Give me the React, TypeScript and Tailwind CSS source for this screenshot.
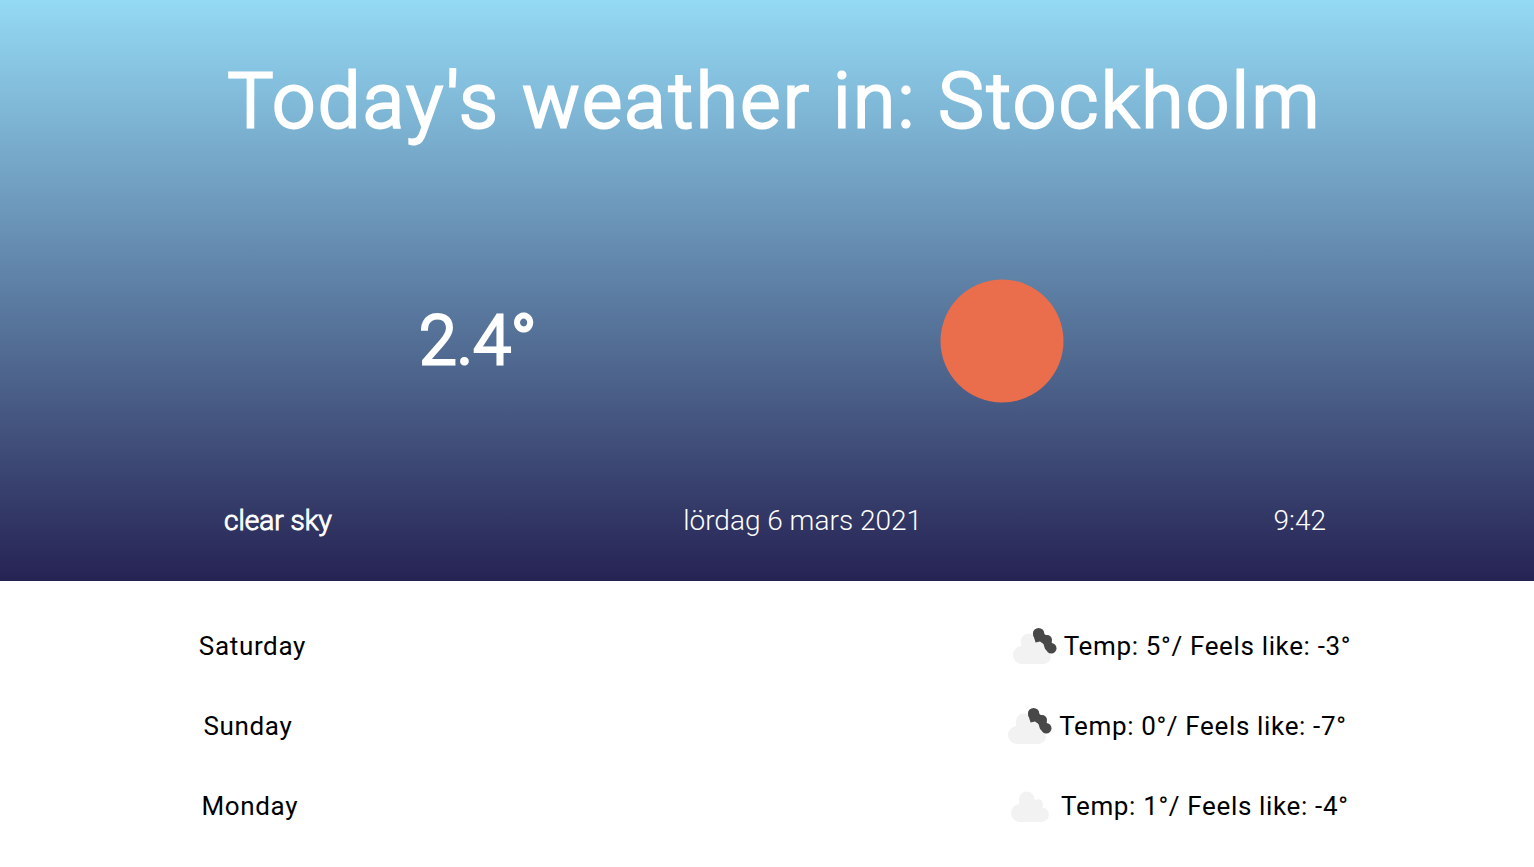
const days = [
  { name: "Saturday", temp: "5", feels: "-3", broken: true },
  { name: "Sunday", temp: "0", feels: "-7", broken: true },
  { name: "Monday", temp: "1", feels: "-4", broken: false },
];

function Cloud({ broken }: { broken: boolean }) {
  return (
    <svg className="size-[50px] shrink-0 overflow-visible" viewBox="-1 -1 50 50" aria-hidden="true">
      <g fill="#f2f2f2" transform={broken ? "translate(0 2)" : "translate(1 0)"}>
        <circle cx="21.7" cy="17.3" r="7.8" />
        <circle cx="33" cy="22" r="4.8" />
        <circle cx="15" cy="31" r="9" />
        <circle cx="36.6" cy="32.7" r="7.3" />
        <path d="M14 17.5h15.5l8 5V40H15z" />
      </g>
      {broken && (
        <g fill="#484848">
          <circle cx="31.6" cy="11.6" r="5.7" />
          <circle cx="40" cy="18" r="5" />
          <circle cx="44.3" cy="26.3" r="5.2" />
          <path d="M26.2 13L28.6 20.5L33 19.5L36.5 22L38 27L42 30.5L46 24L43 16L36 11z" />
        </g>
      )}
    </svg>
  );
}

export default function App() {
  return (
    <main className="font-[Roboto,sans-serif]">
      <header className="bg-linear-to-b/srgb from-[#94daf5] to-[#262353] pt-12 pr-52 pb-10 pl-56 font-light text-white">
        <h1 className="text-center text-[76px] leading-[106px] tracking-[3px] whitespace-nowrap [-webkit-text-stroke:3px_white]">
          Today's weather in: Stockholm
        </h1>
        <div className="flex h-[347px] items-center justify-between pt-[26px] pr-[262px] pl-[195px]">
          <p className="text-[68px] [-webkit-text-stroke:3px_white]">2.4°</p>
          <svg className="size-[124px]" viewBox="0 0 124 124" role="img" aria-label="clear sky">
            <circle cx="62" cy="62" r="61.5" fill="#ea6e4b" />
          </svg>
        </div>
        <div className="flex justify-between text-[28px] leading-10">
          <p className="[-webkit-text-stroke:1px_white]">clear sky</p>
          <p>lördag 6 mars 2021</p>
          <p>9:42</p>
        </div>
      </header>
      <section className="pt-[25px] text-[26px] leading-[38px] tracking-wide text-black">
        {days.map((d) => (
          <div key={d.name} className="flex h-20 items-center justify-around gap-[334px] pl-4">
            <p>{d.name}</p>
            <div className="flex items-center gap-2 whitespace-nowrap">
              <Cloud broken={d.broken} />
              <p>
                Temp: {d.temp}°/ Feels like: {d.feels}°
              </p>
            </div>
          </div>
        ))}
      </section>
    </main>
  );
}
